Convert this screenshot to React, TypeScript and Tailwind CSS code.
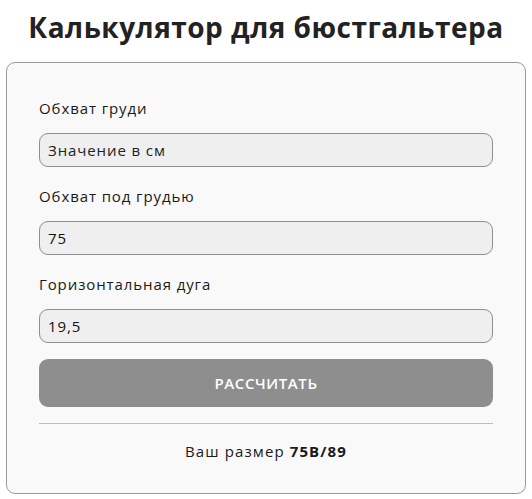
export default function App() {
  const fields = [
    { label: "Обхват груди", value: "", placeholder: "Значение в см" },
    { label: "Обхват под грудью", value: "75", placeholder: "Значение в см" },
    { label: "Горизонтальная дуга", value: "19,5", placeholder: "Значение в см" },
  ];

  return (
    <div className="bg-white w-[532px] h-[499px] font-['Open_Sans',sans-serif] text-[#1a1a1a]">
      <h1 className="pt-[7px] text-center text-[28px] leading-[40px] font-bold tracking-[0.5px] text-[#222]">
        Калькулятор для бюстгальтера
      </h1>
      <div className="mx-[6px] mt-[15px] h-[432px] rounded-[9px] border border-[#9a9a9a] bg-[#f9f9f9] px-[32px] pt-[33px]">
        {fields.map((f) => (
          <div key={f.label} className="mb-[17px]">
            <div className="text-[15px] leading-[24px] tracking-[0.9px] text-[#1a1a1a]">{f.label}</div>
            <input
              className="mt-[13px] block h-[34px] w-full rounded-[9px] border border-[#8f8f8f] bg-[#efefef] px-[8px] text-[15px] tracking-[0.9px] text-[#111] placeholder:text-[#222] outline-none"
              defaultValue={f.value}
              placeholder={f.placeholder}
            />
          </div>
        ))}
        <button className="-mt-[1px] flex h-[48px] w-full items-center justify-center rounded-[9px] bg-[#8e8e8e] text-[15px] font-semibold tracking-[0.6px] text-white">
          РАССЧИТАТЬ
        </button>
        <div className="mt-[16px] h-px bg-[#a9c2dc]" />
        <div className="mt-[16px] text-center text-[15px] leading-[22px] tracking-[1.1px]">
          Ваш размер <span className="font-bold">75B/89</span>
        </div>
      </div>
    </div>
  );
}
